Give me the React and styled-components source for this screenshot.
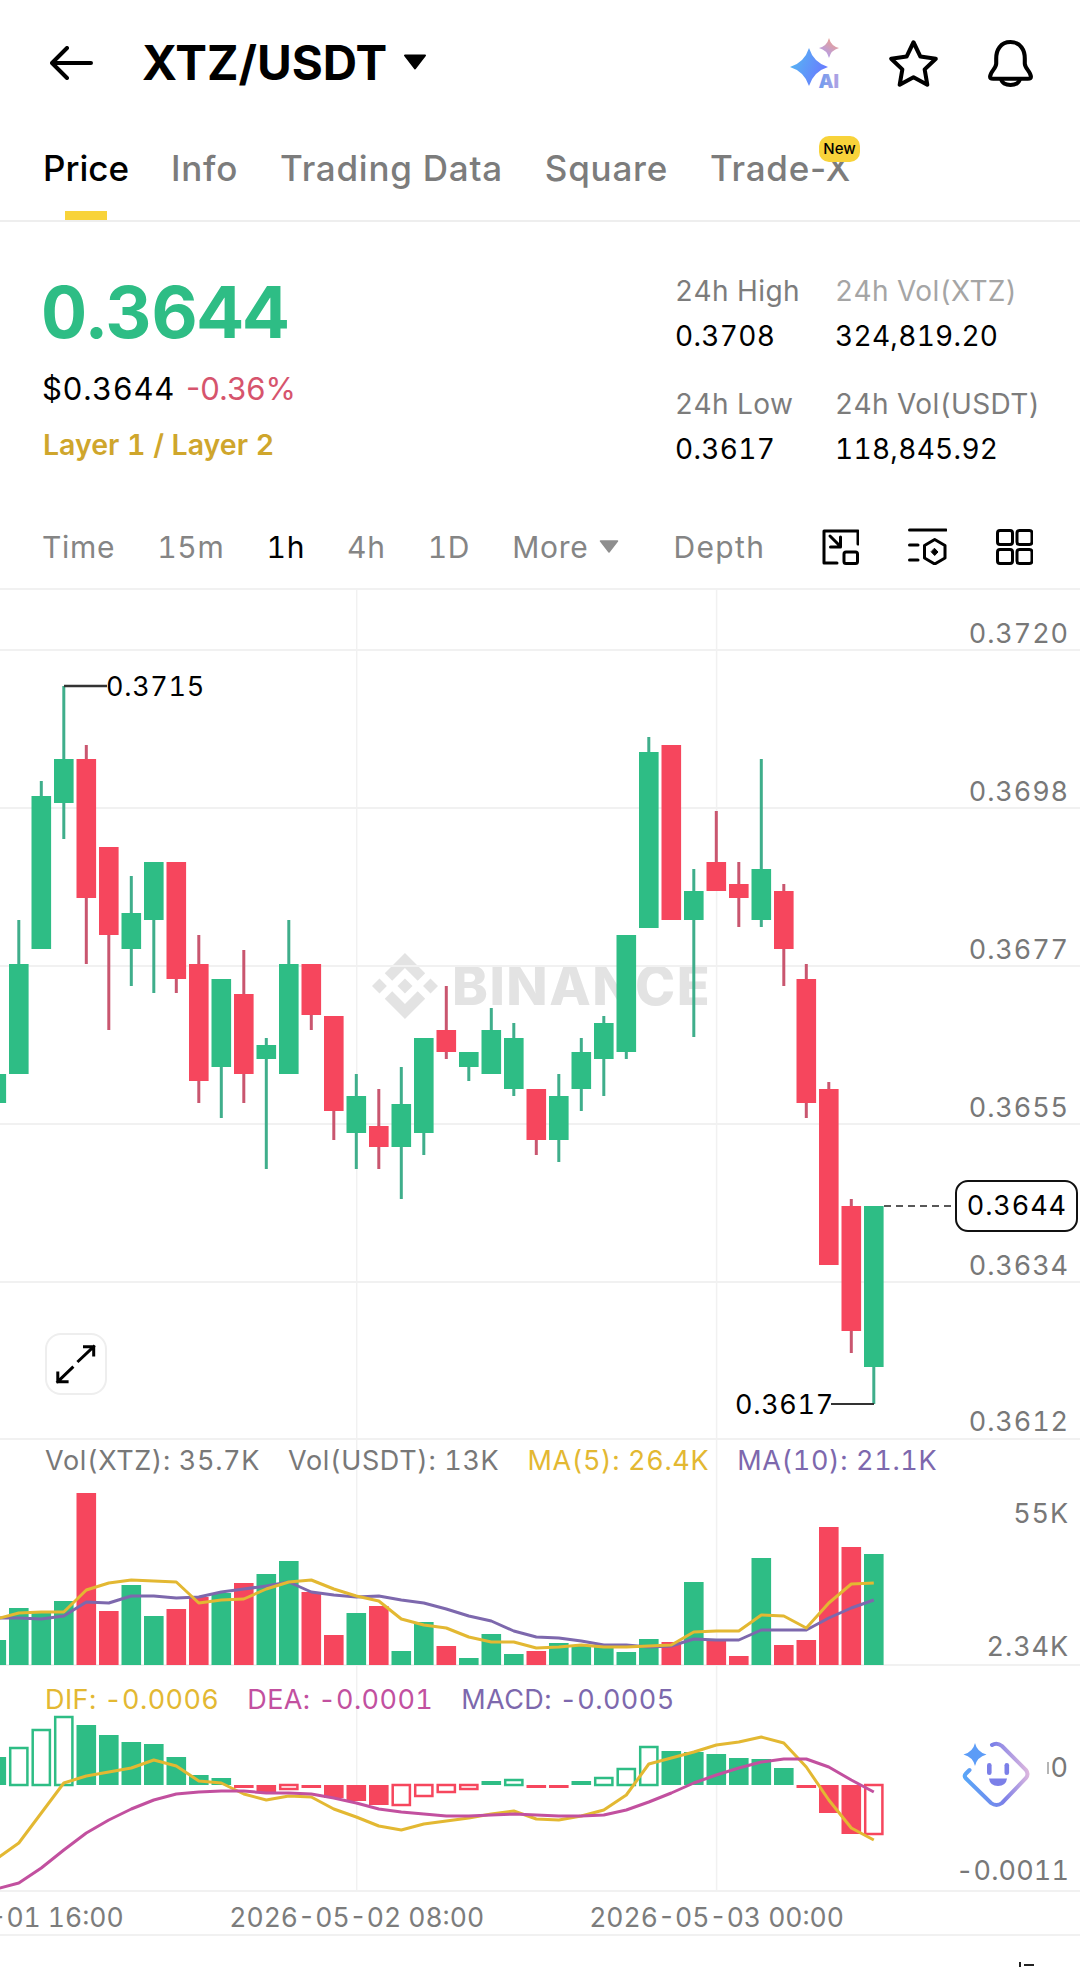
import React from 'react';
import styled, { createGlobalStyle } from 'styled-components';
import { SiBinance } from 'react-icons/si';

const GREEN = '#2ebd85';
const RED = '#f6465d';
const GRID = '#f1f1f1';
const GOLD = '#e3b832';
const PURPLE = '#7d68ad';
const MAGENTA = '#c2509f';

const GlobalStyle = createGlobalStyle`
  html, body {
    margin: 0;
    padding: 0;
    background: #fff;
  }
  body {
    font-family: Inter, "Liberation Sans", sans-serif;
    font-variant-numeric: tabular-nums;
    color: #000;
  }
`;

const Page = styled.div`
  width: 1080px;
  height: 1967px;
  overflow: hidden;
  background: #fff;
  display: flex;
  flex-direction: column;
`;

/* ---------- header ---------- */

const Header = styled.header`
  height: 126px;
  flex: none;
  display: flex;
  align-items: center;
  padding: 0 46px 0 50px;
`;

const Title = styled.h1`
  margin: 0 0 0 48px;
  font-size: 47.5px;
  font-weight: 700;
  line-height: 56px;
`;

const TitleCaret = styled.svg`
  margin-left: 16px;
  margin-top: -2px;
`;

const HeaderIcons = styled.div`
  margin-left: auto;
  display: flex;
  align-items: center;
  gap: 48px;
  svg:first-child {
    margin-right: -3px;
  }
`;

/* ---------- tabs ---------- */

const Tabs = styled.nav`
  height: 96px;
  flex: none;
  display: flex;
  gap: 42px;
  padding-left: 43px;
  border-bottom: 2px solid #eee;
  box-sizing: border-box;
`;

const Tab = styled.div`
  position: relative;
  padding-top: 22px;
  font-size: 35px;
  font-weight: 500;
  font-variant-numeric: normal;
  line-height: 40px;
  letter-spacing: ${p => (p.$active ? 0 : 0.75)}px;
  color: ${p => (p.$active ? '#000' : '#7c7c7c')};
`;

const TabMark = styled.span`
  position: absolute;
  left: 22px;
  bottom: 0;
  width: 42px;
  height: 9px;
  background: #f8d33a;
`;

const NewBadge = styled.span`
  position: absolute;
  top: 10px;
  right: -9px;
  width: 41px;
  height: 26px;
  border-radius: 10px;
  background: #f8d33a;
  color: #000;
  font-size: 15px;
  font-weight: 500;
  line-height: 26px;
  letter-spacing: 0;
  text-align: center;
`;

/* ---------- price summary ---------- */

const Summary = styled.section`
  height: 283px;
  flex: none;
  display: flex;
  justify-content: space-between;
  padding-left: 41px;
`;

const PriceColumn = styled.div`
  padding-top: 50px;
`;

const LastPrice = styled.div`
  font-size: 71.5px;
  font-weight: 700;
  line-height: 80px;
  letter-spacing: -0.4px;
  color: ${GREEN};
`;

const PriceLine = styled.div`
  margin-top: 17px;
  padding-left: 1px;
  display: flex;
  gap: 11px;
  font-size: 31px;
  line-height: 40px;
`;

const UsdPrice = styled.span`
  letter-spacing: 0.6px;
`;

const Change = styled.span`
  font-variant-numeric: normal;
  color: #d6546d;
`;

const Category = styled.div`
  margin-top: 18px;
  padding-left: 2px;
  font-size: 28.5px;
  font-weight: 600;
  line-height: 36px;
  color: #cfa62c;
`;

const StatGrid = styled.div`
  width: 405px;
  padding-top: 51px;
  display: grid;
  grid-template-columns: 160px 1fr;
  grid-auto-rows: 81px;
  row-gap: 32px;
`;

const Stat = styled.div`
  display: flex;
  flex-direction: column;
  gap: 9px;
`;

const StatLabel = styled.span`
  font-size: 28px;
  line-height: 36px;
  letter-spacing: 0.4px;
  color: ${p => (p.$faint ? '#a5a5a5' : '#7c7c7c')};
`;

const StatValue = styled.span`
  font-size: 28px;
  line-height: 36px;
  letter-spacing: 0.3px;
  color: #000;
`;

/* ---------- interval bar ---------- */

const IntervalBar = styled.div`
  height: 85px;
  flex: none;
  display: flex;
  align-items: center;
  gap: 42px;
  padding-left: 42px;
  border-bottom: 2px solid ${GRID};
  box-sizing: border-box;
`;

const Interval = styled.span`
  font-size: 30px;
  line-height: 40px;
  letter-spacing: ${p => p.$spacing ?? 0.7}px;
  color: ${p => (p.$active ? '#000' : '#858585')};
  margin-left: ${p => p.$gap || 0}px;
`;

const MoreCaret = styled.svg`
  margin-left: -31px;
`;

const BarIcons = styled.div`
  margin-left: 15px;
  display: flex;
  align-items: center;
  gap: 49px;
`;

/* ---------- chart panes ---------- */

const Pane = styled.div`
  position: relative;
  flex: none;
  height: ${p => p.$height}px;
  overflow: hidden;
`;

const Plot = styled.svg`
  position: absolute;
  inset: 0;
  display: block;
`;

const Watermark = styled.div`
  position: absolute;
  left: 372px;
  top: 363px;
  display: flex;
  align-items: center;
  gap: 14px;
  color: #e3e3e3;
  font-size: 54px;
  font-weight: 800;
  line-height: 66px;
  letter-spacing: 1.5px;
`;

const AxisTick = styled.span`
  position: absolute;
  right: 11px;
  transform: translateY(-50%);
  font-size: 27px;
  line-height: 32px;
  letter-spacing: ${p => p.$spacing ?? 0.9}px;
  color: #787878;
`;

const ExtremeLabel = styled.span`
  position: absolute;
  transform: translateY(-50%);
  font-size: 27px;
  line-height: 32px;
  letter-spacing: 0.7px;
  color: #000;
`;

const PriceTag = styled.div`
  position: absolute;
  left: 955px;
  top: 590px;
  width: 123px;
  height: 52px;
  box-sizing: border-box;
  border: 2px solid #111;
  border-radius: 13px;
  background: #fff;
  padding-right: 9px;
  text-align: right;
  font-size: 27px;
  line-height: 48px;
  letter-spacing: 0.9px;
  color: #000;
`;

const ExpandButton = styled.button`
  position: absolute;
  left: 45px;
  top: 743px;
  width: 62px;
  height: 62px;
  padding: 0;
  box-sizing: border-box;
  border: 2px solid #eee;
  border-radius: 16px;
  background: #fff;
  svg {
    display: block;
    margin: -2px;
  }
`;

const Legend = styled.div`
  position: relative;
  display: flex;
  gap: 28px;
  padding: ${p => p.$top}px 0 0 45px;
  font-size: 27px;
  line-height: 42px;
  letter-spacing: ${p => p.$spacing}px;
`;

const LegendItem = styled.span`
  color: ${p => p.$color};
`;

const BotButton = styled.div`
  position: absolute;
  left: 960px;
  top: 71px;
  width: 72px;
  height: 72px;
  svg {
    display: block;
  }
`;

const ZeroTick = styled(AxisTick)`
  &::before {
    content: '';
    position: absolute;
    left: -4px;
    top: 10px;
    width: 2px;
    height: 12px;
    background: #b5b5b5;
  }
`;

const TimeAxis = styled.div`
  position: relative;
  height: 46px;
  flex: none;
  box-sizing: border-box;
  border-top: 2px solid ${GRID};
  border-bottom: 2px solid ${GRID};
  overflow: hidden;
`;

const TimeLabel = styled.span`
  position: absolute;
  top: 9px;
  transform: translateX(-50%);
  font-size: 26.5px;
  line-height: 32px;
  white-space: nowrap;
  color: #7c7c7c;
`;

const Footer = styled.footer`
  flex: 1;
  display: flex;
  align-items: flex-end;
  justify-content: flex-end;
  padding-right: 44px;
`;

/* ---------- data, one entry per candle starting off the left edge ---------- */

// colour, body top, body bottom, wick top, wick bottom (page y)
const candles = [
  ['g', 1074, 1103],
  ['g', 964, 1074, 920],
  ['g', 796, 949, 781],
  ['g', 759, 803, 686, 839],
  ['r', 759, 898, 745, 964],
  ['r', 847, 935, null, 1030],
  ['g', 913, 949, 876, 986],
  ['g', 862, 920, null, 993],
  ['r', 862, 979, null, 993],
  ['r', 964, 1081, 935, 1103],
  ['g', 979, 1067, null, 1118],
  ['r', 994, 1074, 950, 1103],
  ['g', 1045, 1059, 1038, 1169],
  ['g', 964, 1074, 920],
  ['r', 964, 1015, null, 1030],
  ['r', 1016, 1111, null, 1140],
  ['g', 1096, 1133, 1074, 1169],
  ['r', 1126, 1147, 1089, 1169],
  ['g', 1104, 1147, 1067, 1199],
  ['g', 1038, 1133, null, 1155],
  ['r', 1030, 1052, 986, 1059],
  ['g', 1052, 1067, null, 1081],
  ['g', 1030, 1074, 1008],
  ['g', 1038, 1089, 1023, 1096],
  ['r', 1089, 1140, null, 1155],
  ['g', 1096, 1140, 1074, 1162],
  ['g', 1052, 1089, 1038, 1111],
  ['g', 1023, 1059, 1016, 1096],
  ['g', 935, 1052, null, 1059],
  ['g', 752, 928, 737],
  ['r', 745, 920],
  ['g', 891, 920, 869, 1037],
  ['r', 862, 891, 811],
  ['r', 884, 898, 862, 927],
  ['g', 869, 920, 759, 927],
  ['r', 891, 949, 884, 986],
  ['r', 979, 1103, 964, 1118],
  ['r', 1089, 1265, 1082],
  ['r', 1206, 1331, 1199, 1353],
  ['g', 1206, 1367, null, 1404],
];

const volumes = [
  200, 168, 171, 161, 53, 171, 145, 176, 169, 157, 153, 143, 134, 121, 152, 195, 173, 166, 211, 182,
  206, 218, 194, 214, 211, 203, 205, 207, 212, 199, 202, 142, 199, 216, 118, 205, 200, 87, 107, 114,
];

const ma5 = [
  179, 173, 172, 172, 150, 143, 140, 141, 142, 163, 160, 159, 149, 142, 140, 149, 156, 161, 179, 185,
  188, 197, 202, 202, 208, 207, 205, 207, 207, 206, 205, 192, 191, 191, 175, 176, 188, 163, 144, 143,
];

const ma10 = [
  178, 178, 179, 176, 162, 163, 156, 156, 158, 157, 152, 149, 146, 142, 152, 155, 157, 156, 160, 163,
  169, 176, 181, 191, 197, 198, 201, 205, 205, 207, 206, 199, 200, 200, 190, 190, 190, 178, 168, 160,
];

const MACD_ZERO = 119;

const macdBars = [
  91, 82, 64, 51, 59, 69, 76, 78, 91, 109, 112, 122, 127, 123, 122, 132, 135, 139, 139, 130,
  126, 123, 115, 114, 122, 122, 115, 112, 103, 81, 85, 86, 88, 92, 93, 102, 122, 147, 168, 168,
];
const hollowBars = new Set([1, 2, 3, 13, 18, 19, 20, 21, 23, 27, 28, 29, 39]);

const dif = [
  193, 177, 147, 117, 110, 106, 102, 94, 100, 115, 117, 128, 134, 130, 131, 143, 151, 160, 164, 158,
  155, 152, 148, 145, 153, 154, 150, 144, 129, 98, 92, 86, 79, 76, 71, 77, 101, 134, 162, 174,
];

const dea = [
  223, 217, 202, 184, 167, 154, 143, 134, 128, 126, 125, 125, 127, 127, 128, 132, 137, 143, 146, 148,
  150, 150, 149, 148, 149, 150, 150, 149, 144, 136, 127, 117, 109, 102, 96, 93, 93, 101, 114, 126,
];

const centerX = index => 18.8 + 22.5 * (index - 1);
const BODY = 19.6;
const linePoints = values => values.map((y, i) => `${centerX(i)},${y}`).join(' ');

const priceTicks = [
  ['0.3720', 44],
  ['0.3698', 202],
  ['0.3677', 360],
  ['0.3655', 518],
  ['0.3634', 676],
  ['0.3612', 832],
];

const VerticalGrid = ({ height }) => (
  <>
    <line x1="356.7" x2="356.7" y1="0" y2={height} stroke={GRID} strokeWidth="1.5" />
    <line x1="716.6" x2="716.6" y1="0" y2={height} stroke={GRID} strokeWidth="1.5" />
  </>
);

const CandlePlot = () => (
  <Plot width="1080" height="850" viewBox="0 590 1080 850">
    {[650, 808, 966, 1124, 1282].map(y => (
      <line key={y} x1="0" x2="1080" y1={y} y2={y} stroke={GRID} strokeWidth="2" />
    ))}
    <line x1="356.7" x2="356.7" y1="590" y2="1440" stroke={GRID} strokeWidth="1.5" />
    <line x1="716.6" x2="716.6" y1="590" y2="1440" stroke={GRID} strokeWidth="1.5" />
    <line x1="0" x2="1080" y1="1439" y2="1439" stroke={GRID} strokeWidth="2" />
    {candles.map(([c, top, bottom, wickTop, wickBottom], i) => {
      const x = centerX(i);
      return (
        <g key={i}>
          <line
            x1={x}
            x2={x}
            y1={wickTop ?? top}
            y2={wickBottom ?? bottom}
            stroke={c === 'g' ? '#3fae8b' : '#c9566f'}
            strokeWidth="3"
          />
          <rect x={x - BODY / 2} y={top} width={BODY} height={bottom - top} fill={c === 'g' ? GREEN : RED} />
        </g>
      );
    })}
    <path d="M64 686H107" stroke="#333" strokeWidth="2.5" fill="none" />
    <path d="M831 1404H874" stroke="#333" strokeWidth="2" fill="none" />
    <line x1="884" x2="955" y1="1206" y2="1206" stroke="#222" strokeWidth="1.5" strokeDasharray="7 5" />
  </Plot>
);

const VolumePlot = () => (
  <Plot width="1080" height="226" viewBox="0 0 1080 226">
    <VerticalGrid height={226} />
    <line x1="0" x2="1080" y1="225" y2="225" stroke={GRID} strokeWidth="2" />
    {volumes.map((y, i) => (
      <rect
        key={i}
        x={centerX(i) - BODY / 2}
        y={y}
        width={BODY}
        height={225 - y}
        fill={candles[i][0] === 'g' ? GREEN : RED}
      />
    ))}
    <polyline points={linePoints(ma10)} fill="none" stroke={PURPLE} strokeWidth="3" strokeLinejoin="round" />
    <polyline points={linePoints(ma5)} fill="none" stroke={GOLD} strokeWidth="3" strokeLinejoin="round" />
  </Plot>
);

const MacdPlot = () => (
  <Plot width="1080" height="224" viewBox="0 0 1080 224">
    <VerticalGrid height={224} />
    {macdBars.map((end, i) => {
      const color = end < MACD_ZERO ? GREEN : RED;
      const top = Math.min(end, MACD_ZERO);
      const height = Math.abs(end - MACD_ZERO);
      const x = centerX(i) - BODY / 2;
      return hollowBars.has(i) ? (
        <rect key={i} x={x + 1.2} y={top} width={BODY - 2.4} height={height} fill="#fff" stroke={color} strokeWidth="2.5" />
      ) : (
        <rect key={i} x={x} y={top} width={BODY} height={height} fill={color} />
      );
    })}
    <polyline points={linePoints(dif)} fill="none" stroke={GOLD} strokeWidth="3" strokeLinejoin="round" />
    <polyline points={linePoints(dea)} fill="none" stroke={MAGENTA} strokeWidth="3" strokeLinejoin="round" />
  </Plot>
);

/* ---------- icons ---------- */

const BackIcon = () => (
  <svg width="44" height="34" viewBox="0 0 44 34" fill="none" stroke="#000" strokeWidth="4" strokeLinecap="round" strokeLinejoin="round">
    <path d="M17 2 2 17l15 15M3 17h38" />
  </svg>
);

const AiIcon = () => (
  <svg width="53" height="50" viewBox="0 0 53 50">
    <defs>
      <linearGradient id="aiBig" x1="0" y1="0.2" x2="1" y2="0.6">
        <stop offset="0" stopColor="#55b8f2" />
        <stop offset="1" stopColor="#6a78ff" />
      </linearGradient>
      <linearGradient id="aiSmall" x1="0.9" y1="0" x2="0.2" y2="1">
        <stop offset="0" stopColor="#f4a184" />
        <stop offset="1" stopColor="#ab9df5" />
      </linearGradient>
      <linearGradient id="aiText" x1="0" y1="0" x2="1" y2="0">
        <stop offset="0" stopColor="#6a9cf0" />
        <stop offset="1" stopColor="#b4a2e2" />
      </linearGradient>
    </defs>
    <path d="M19 10Q23.500 24.500 38 29Q23.500 33.500 19 48Q14.500 33.500 0 29Q14.500 24.500 19 10Z" fill="url(#aiBig)" />
    <path d="M39 0Q41 8 49 10Q41 12 39 20Q37 12 29 10Q37 8 39 0Z" fill="url(#aiSmall)" />
    <text x="28.500" y="50" fontFamily="Inter, sans-serif" fontSize="19" fontWeight="900" fill="url(#aiText)">AI</text>
  </svg>
);

const StarIcon = () => (
  <svg width="51" height="49" viewBox="0 0 48 46" fill="none" stroke="#000" strokeWidth="3.800" strokeLinejoin="round">
    <path d="M24 3 30.500 16.500 45 18.500 34.500 28.500 37 43 24 36 11 43 13.500 28.500 3 18.500 17.500 16.500Z" />
  </svg>
);

const BellIcon = () => (
  <svg width="47" height="49" viewBox="0 0 46 48" fill="none" stroke="#000" strokeWidth="4" strokeLinejoin="round">
    <path d="M23 3C13 3 9 11 9 19v5c0 5-6 8-6 13q0 2 3 2h34q3 0 3-2c0-5-6-8-6-13v-5C37 11 33 3 23 3Z" />
    <path d="M14 39c0 8 18 8 18 0" />
  </svg>
);

const ResizeIcon = () => (
  <svg width="37" height="36" viewBox="0 0 37 36" fill="none" stroke="#000" strokeWidth="3" strokeLinecap="round" strokeLinejoin="round">
    <path d="M36 15V2H2v32h13" />
    <rect x="22" y="23" width="13.500" height="11.500" rx="2" />
    <path d="M8 7l10 10M18.500 8v10h-10" />
  </svg>
);

const IndicatorIcon = () => (
  <svg width="39" height="37" viewBox="0 0 39 37" fill="none" stroke="#000" strokeWidth="3" strokeLinecap="round" strokeLinejoin="round">
    <path d="M1.500 2H38M1.500 17H10M1.500 32H10" />
    <path d="M26.700 11.500 37 17.500V30l-10.300 6-10.200-6V17.500Z" />
    <path d="M26.700 20.500 30 24l-3.300 3.500L23.400 24Z" fill="#000" strokeWidth="1" />
  </svg>
);

const GridIcon = () => (
  <svg width="37" height="36" viewBox="0 0 37 36" fill="none" stroke="#000" strokeWidth="3" strokeLinejoin="round">
    <rect x="1.500" y="1.500" width="15" height="14" rx="2.500" />
    <rect x="21" y="1.500" width="15" height="14" rx="2.500" />
    <rect x="1.500" y="20.500" width="15" height="14" rx="2.500" />
    <rect x="21" y="20.500" width="15" height="14" rx="2.500" />
  </svg>
);

const ExpandIcon = () => (
  <svg width="62" height="62" viewBox="0 0 62 62" fill="none" stroke="#000" strokeWidth="3" strokeLinecap="square">
    <path d="M33.500 28 48.700 13.700M39.500 13.700h9.200V22" />
    <path d="M27.300 34.700 12.800 48.700M12.800 40v8.700h9.300" />
  </svg>
);

const BotIcon = () => (
  <svg width="72" height="72" viewBox="0 0 72 72" fill="none">
    <defs>
      <linearGradient id="botEdge" x1="0" y1="0.6" x2="1" y2="0.4">
        <stop offset="0" stopColor="#58a6f8" />
        <stop offset="0.55" stopColor="#7d80e8" />
        <stop offset="1" stopColor="#dcb6de" />
      </linearGradient>
    </defs>
    <rect width="72" height="72" fill="#fff" />
    <path d="M9.500 33 6 36.500Q3.500 39 6 41.500L31 66q5.500 4 11 0l24-25q3-4 0-8L42 9q-5-4-10-1" stroke="url(#botEdge)" strokeWidth="4" strokeLinecap="round" />
    <path d="M15 6Q17 15 26.500 17.500 17 20 15 29 13 20 3.500 17.500 13 15 15 6Z" fill="#5c9cf7" />
    <rect x="27" y="26" width="4.600" height="12" rx="2.300" fill="#7b7fe8" />
    <rect x="44.500" y="26" width="4.600" height="12" rx="2.300" fill="#7b7fe8" />
    <path d="M29 41.500H47Q46 49 38 49 30 49 29 41.500Z" fill="#7b7fe8" />
  </svg>
);

const tabs = ['Price', 'Info', 'Trading Data', 'Square', 'Trade-X'];
const intervals = ['Time', '15m', '1h', '4h', '1D', 'More'];

export default function App() {
  return (
    <Page>
      <GlobalStyle />
      <Header>
        <BackIcon />
        <Title>XTZ/USDT</Title>
        <TitleCaret width="24" height="16" viewBox="0 0 24 16">
          <path d="M2 1.500h20L12 14.500Z" fill="#000" stroke="#000" strokeWidth="2" strokeLinejoin="round" />
        </TitleCaret>
        <HeaderIcons>
          <AiIcon />
          <StarIcon />
          <BellIcon />
        </HeaderIcons>
      </Header>

      <Tabs>
        {tabs.map(tab => (
          <Tab key={tab} $active={tab === 'Price'}>
            {tab}
            {tab === 'Price' && <TabMark />}
            {tab === 'Trade-X' && <NewBadge>New</NewBadge>}
          </Tab>
        ))}
      </Tabs>

      <Summary>
        <PriceColumn>
          <LastPrice>0.3644</LastPrice>
          <PriceLine>
            <UsdPrice>$0.3644</UsdPrice>
            <Change>-0.36%</Change>
          </PriceLine>
          <Category>Layer 1 / Layer 2</Category>
        </PriceColumn>
        <StatGrid>
          <Stat>
            <StatLabel>24h High</StatLabel>
            <StatValue>0.3708</StatValue>
          </Stat>
          <Stat>
            <StatLabel $faint>24h Vol(XTZ)</StatLabel>
            <StatValue>324,819.20</StatValue>
          </Stat>
          <Stat>
            <StatLabel>24h Low</StatLabel>
            <StatValue>0.3617</StatValue>
          </Stat>
          <Stat>
            <StatLabel>24h Vol(USDT)</StatLabel>
            <StatValue>118,845.92</StatValue>
          </Stat>
        </StatGrid>
      </Summary>

      <IntervalBar>
        {intervals.map(item => (
          <Interval key={item} $active={item === '1h'}>
            {item}
          </Interval>
        ))}
        <MoreCaret width="20" height="13" viewBox="0 0 20 13">
          <path d="M1.500 1h17L10 12Z" fill="#8e8e8e" stroke="#8e8e8e" strokeWidth="1.500" strokeLinejoin="round" />
        </MoreCaret>
        <Interval $gap={12} $spacing={1.4}>Depth</Interval>
        <BarIcons>
          <ResizeIcon />
          <IndicatorIcon />
          <GridIcon />
        </BarIcons>
      </IntervalBar>

      <Pane $height={850}>
        <Watermark>
          <SiBinance size={66} />
          BINANCE
        </Watermark>
        <CandlePlot />
        {priceTicks.map(([label, y]) => (
          <AxisTick key={label} style={{ top: y }}>
            {label}
          </AxisTick>
        ))}
        <ExtremeLabel style={{ left: 106, top: 97 }}>0.3715</ExtremeLabel>
        <ExtremeLabel style={{ left: 735, top: 815 }}>0.3617</ExtremeLabel>
        <PriceTag>0.3644</PriceTag>
        <ExpandButton aria-label="Expand chart">
          <ExpandIcon />
        </ExpandButton>
      </Pane>

      <Pane $height={226}>
        <VolumePlot />
        <Legend $top={0} $spacing={0.65}>
          <LegendItem $color="#787878">Vol(XTZ): 35.7K</LegendItem>
          <LegendItem $color="#787878">Vol(USDT): 13K</LegendItem>
          <LegendItem $color={GOLD}>MA(5): 26.4K</LegendItem>
          <LegendItem $color={PURPLE}>MA(10): 21.1K</LegendItem>
        </Legend>
        <AxisTick style={{ top: 74 }}>55K</AxisTick>
        <AxisTick style={{ top: 207 }}>2.34K</AxisTick>
      </Pane>

      <Pane $height={224}>
        <MacdPlot />
        <Legend $top={13} $spacing={0.4}>
          <LegendItem $color={GOLD}>DIF: -0.0006</LegendItem>
          <LegendItem $color={MAGENTA}>DEA: -0.0001</LegendItem>
          <LegendItem $color={PURPLE}>MACD: -0.0005</LegendItem>
        </Legend>
        <ZeroTick style={{ top: 102 }}>0</ZeroTick>
        <AxisTick $spacing={0.1} style={{ top: 205 }}>-0.0011</AxisTick>
        <BotButton>
          <BotIcon />
        </BotButton>
      </Pane>

      <TimeAxis>
        <TimeLabel style={{ left: -3.7 }}>2026-05-01 16:00</TimeLabel>
        <TimeLabel style={{ left: 356.7 }}>2026-05-02 08:00</TimeLabel>
        <TimeLabel style={{ left: 716.6 }}>2026-05-03 00:00</TimeLabel>
      </TimeAxis>

      <Footer>
        <svg width="18" height="5" viewBox="0 0 18 5" stroke="#222" strokeWidth="2">
          <path d="M2 0v5M6 3h10" />
        </svg>
      </Footer>
    </Page>
  );
}
